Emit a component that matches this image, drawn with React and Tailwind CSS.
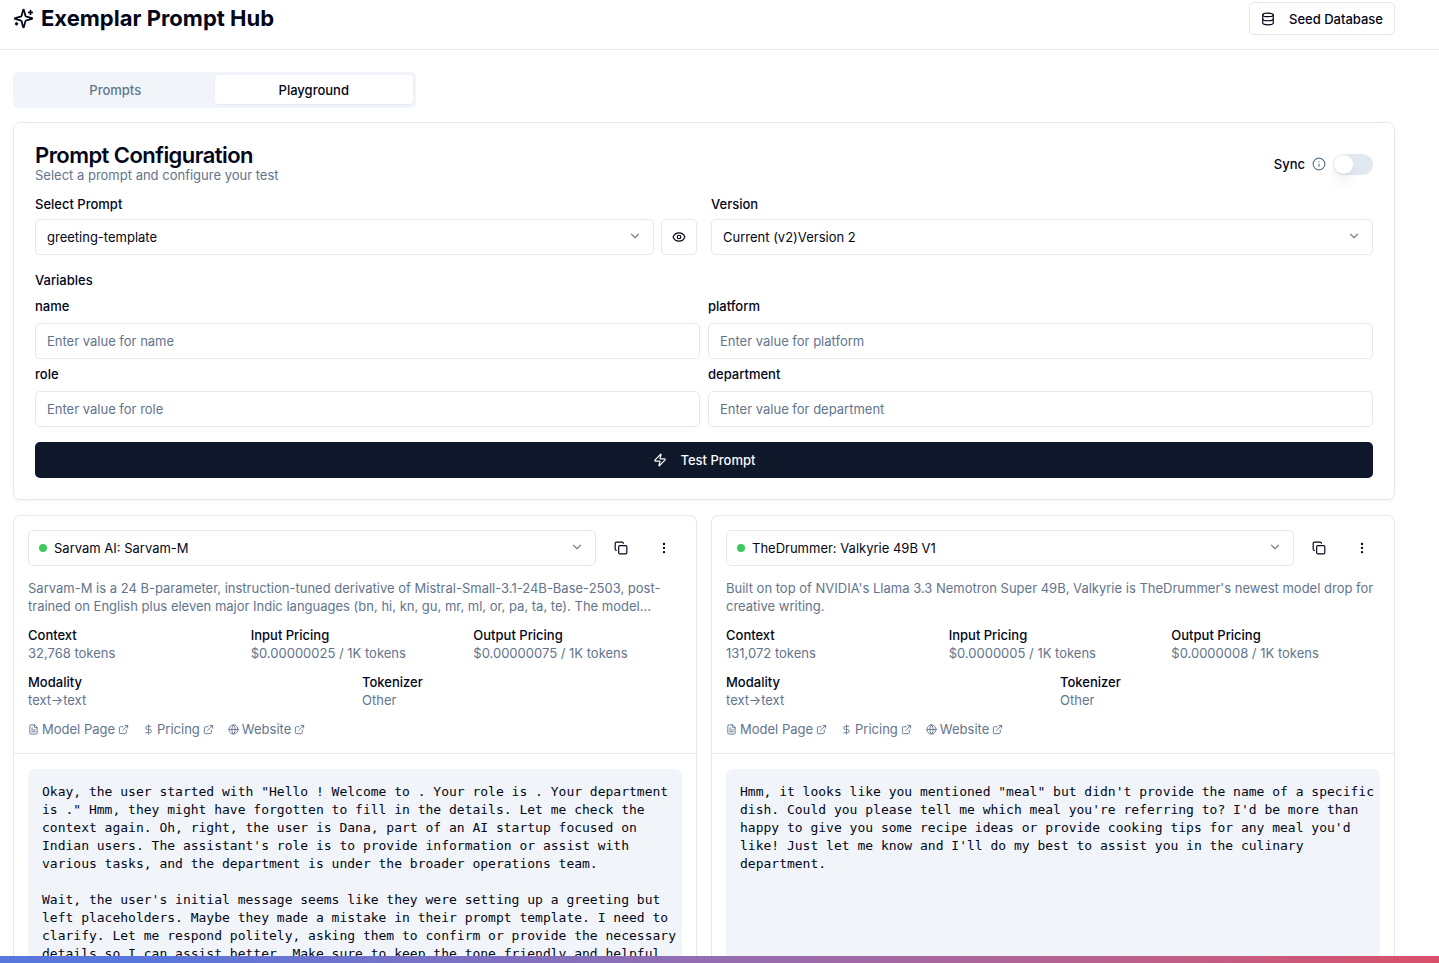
import React from 'react';
import {
  Database, Info, Eye, ChevronDown, Zap, Copy, EllipsisVertical,
  FileText, DollarSign, Globe, ExternalLink,
} from 'lucide-react';

const variables = ['name', 'platform', 'role', 'department'];

const models = [
  {
    id: 'sarvam',
    name: 'Sarvam AI: Sarvam-M',
    description:
      'Sarvam-M is a 24 B-parameter, instruction-tuned derivative of Mistral-Small-3.1-24B-Base-2503, post-trained on English plus eleven major Indic languages (bn, hi, kn, gu, mr, ml, or, pa, ta, te). The model...',
    pricing: [
      ['Context', '32,768 tokens'],
      ['Input Pricing', '$0.00000025 / 1K tokens'],
      ['Output Pricing', '$0.00000075 / 1K tokens'],
    ],
    output: `Okay, the user started with "Hello ! Welcome to . Your role is . Your department
is ." Hmm, they might have forgotten to fill in the details. Let me check the
context again. Oh, right, the user is Dana, part of an AI startup focused on
Indian users. The assistant's role is to provide information or assist with
various tasks, and the department is under the broader operations team.

Wait, the user's initial message seems like they were setting up a greeting but
left placeholders. Maybe they made a mistake in their prompt template. I need to
clarify. Let me respond politely, asking them to confirm or provide the necessary
details so I can assist better. Make sure to keep the tone friendly and helpful.`,
  },
  {
    id: 'valkyrie',
    name: 'TheDrummer: Valkyrie 49B V1',
    description:
      "Built on top of NVIDIA's Llama 3.3 Nemotron Super 49B, Valkyrie is TheDrummer's newest model drop for creative writing.",
    pricing: [
      ['Context', '131,072 tokens'],
      ['Input Pricing', '$0.0000005 / 1K tokens'],
      ['Output Pricing', '$0.0000008 / 1K tokens'],
    ],
    output: `Hmm, it looks like you mentioned "meal" but didn't provide the name of a specific
dish. Could you please tell me which meal you're referring to? I'd be more than
happy to give you some recipe ideas or provide cooking tips for any meal you'd
like! Just let me know and I'll do my best to assist you in the culinary
department.`,
  },
];

const details = [
  ['Modality', 'text→text'],
  ['Tokenizer', 'Other'],
];

const links = [
  ['Model Page', FileText],
  ['Pricing', DollarSign],
  ['Website', Globe],
];

function SparklesIcon({ className }) {
  return (
    <svg
      viewBox="0 0 24 24"
      fill="none"
      stroke="currentColor"
      strokeWidth="2"
      strokeLinecap="round"
      strokeLinejoin="round"
      aria-hidden="true"
      className={className}
    >
      <path d="M9.937 15.5A2 2 0 0 0 8.5 14.063l-6.135-1.582a.5.5 0 0 1 0-.962L8.5 9.936A2 2 0 0 0 9.937 8.5l1.582-6.135a.5.5 0 0 1 .963 0L14.063 8.5A2 2 0 0 0 15.5 9.937l6.135 1.581a.5.5 0 0 1 0 .964L15.5 14.063a2 2 0 0 0-1.437 1.437l-1.582 6.135a.5.5 0 0 1-.963 0z" />
      <path d="M20 3v4" />
      <path d="M22 5h-4" />
      <path d="M4 17v2" />
      <path d="M5 18H3" />
    </svg>
  );
}

function Select({ id, label, value, dot }) {
  return (
    <div className="relative min-w-0 flex-1">
      {dot && <span className="absolute top-[14px] left-[11px] size-2 rounded-full bg-[#3ec95f]" />}
      <select
        id={id}
        aria-label={label}
        className={`block h-9 w-full appearance-none rounded-[5px] border border-slate-200 bg-white pr-8 pb-px ${dot ? 'pl-[25px]' : 'pl-[11px]'}`}
      >
        <option>{value}</option>
      </select>
      <ChevronDown className="pointer-events-none absolute top-[10px] right-3 size-[14px] text-slate-950 opacity-50" />
    </div>
  );
}

function Fact({ label, value }) {
  return (
    <div>
      <dt className="font-medium">{label}</dt>
      <dd className="text-slate-500">{value}</dd>
    </div>
  );
}

function ModelCard({ model }) {
  return (
    <section className="flex min-w-0 flex-col rounded-t-[7px] border border-b-0 border-slate-200">
      <div className="border-b border-slate-200 p-[14px] pb-[15px]">
        <div className="flex gap-[7px]">
          <Select id={model.id} label="Model" value={model.name} dot />
          <button aria-label="Copy" className="flex size-9 items-center justify-center">
            <Copy className="size-[14px]" />
          </button>
          <button aria-label="More options" className="flex size-9 items-center justify-center">
            <EllipsisVertical className="size-[14px]" />
          </button>
        </div>
        <p className="mt-[13px] text-slate-500">{model.description}</p>
        <dl className="mt-[11px] grid grid-cols-3 gap-x-[14px]">
          {model.pricing.map(([k, v]) => <Fact key={k} label={k} value={v} />)}
        </dl>
        <dl className="mt-[11px] grid grid-cols-2 gap-x-[14px]">
          {details.map(([k, v]) => <Fact key={k} label={k} value={v} />)}
        </dl>
        <div className="mt-[11px] flex gap-[14px] text-slate-500">
          {links.map(([name, Icon]) => (
            <a key={name} href="#" className="flex items-center gap-[3px]">
              <Icon className="size-[11px]" />
              {name}
              <ExternalLink className="size-[11px]" />
            </a>
          ))}
        </div>
      </div>
      <div className="flex min-h-0 flex-1 flex-col px-[14px] pt-[15px]">
        <pre className="flex-1 overflow-hidden rounded-t-[7px] bg-slate-100 p-[14px] font-['DejaVu_Sans_Mono',monospace]">
          {model.output}
        </pre>
      </div>
    </section>
  );
}

export default function App() {
  return (
    <div className="flex h-screen flex-col overflow-hidden bg-white font-['Inter',sans-serif] text-[13px] leading-[18px] text-slate-950">
      <header className="flex shrink-0 items-start justify-between border-b border-slate-200 pt-[2px] pr-11 pb-[14px] pl-[13px]">
        <h1 className="flex items-center gap-[7px] text-[22px] leading-8 font-bold">
          <SparklesIcon className="size-[21px]" />
          Exemplar Prompt Hub
        </h1>
        <button className="flex h-[33px] items-center gap-[14px] rounded-[5px] border border-slate-200 px-[11px] font-medium">
          <Database className="size-[14px]" />
          Seed Database
        </button>
      </header>

      <main className="flex min-h-0 flex-1 flex-col pt-[22px] pr-11 pl-[13px]">
        <div role="tablist" className="grid h-9 w-[403px] shrink-0 grid-cols-2 rounded-[5px] bg-slate-100 px-[3px] pt-[3px] pb-1 font-medium">
          <button role="tab" aria-selected="false" className="text-slate-500">Prompts</button>
          <button role="tab" aria-selected="true" className="rounded-[4px] bg-white shadow-xs">Playground</button>
        </div>

        <section className="mt-[14px] shrink-0 rounded-[7px] border border-slate-200 p-[21px] shadow-xs">
          <div className="flex items-center justify-between">
            <div>
              <h2 className="text-[22px] leading-[22px] font-semibold tracking-tight">Prompt Configuration</h2>
              <p className="text-slate-500">Select a prompt and configure your test</p>
            </div>
            <div className="flex items-center gap-[7px]">
              <label htmlFor="sync" className="font-medium">Sync</label>
              <Info className="size-[14px] text-slate-500" />
              <input
                id="sync"
                type="checkbox"
                role="switch"
                className="h-[21px] w-10 appearance-none rounded-full bg-slate-200 p-px before:block before:size-[19px] before:rounded-full before:bg-white before:shadow-lg checked:bg-slate-900 checked:before:ml-auto"
              />
            </div>
          </div>

          <div className="mt-[11px] grid grid-cols-2 gap-[14px]">
            <div>
              <label htmlFor="prompt" className="mb-[6px] block font-medium">Select Prompt</label>
              <div className="flex gap-[7px]">
                <Select id="prompt" value="greeting-template" />
                <button aria-label="Preview prompt" className="flex size-9 items-center justify-center rounded-[5px] border border-slate-200">
                  <Eye className="size-[14px]" />
                </button>
              </div>
            </div>
            <div>
              <label htmlFor="version" className="mb-[6px] block font-medium">Version</label>
              <div className="flex">
                <Select id="version" value="Current (v2)Version 2" />
              </div>
            </div>
          </div>

          <h3 className="mt-4 font-medium">Variables</h3>
          <div className="mt-2 grid grid-cols-2 gap-x-2 gap-y-[6px]">
            {variables.map((v) => (
              <div key={v}>
                <label htmlFor={v} className="mb-2 block font-medium">{v}</label>
                <input
                  id={v}
                  placeholder={`Enter value for ${v}`}
                  className="block h-9 w-full rounded-[5px] border border-slate-200 px-[11px] placeholder:text-slate-500"
                />
              </div>
            ))}
          </div>

          <button className="mt-[15px] flex h-9 w-full items-center justify-center gap-[14px] rounded-[5px] bg-[#0f172a] font-medium text-slate-50">
            <Zap className="size-[14px]" />
            Test Prompt
          </button>
        </section>

        <div className="mt-[15px] grid min-h-0 flex-1 grid-cols-2 gap-[14px]">
          {models.map((m) => <ModelCard key={m.id} model={m} />)}
        </div>
      </main>

      <div className="h-[7px] shrink-0 bg-linear-to-r from-[#5876dc] from-10% via-[#a068a4] via-60% to-[#d94f6a]" />
    </div>
  );
}
